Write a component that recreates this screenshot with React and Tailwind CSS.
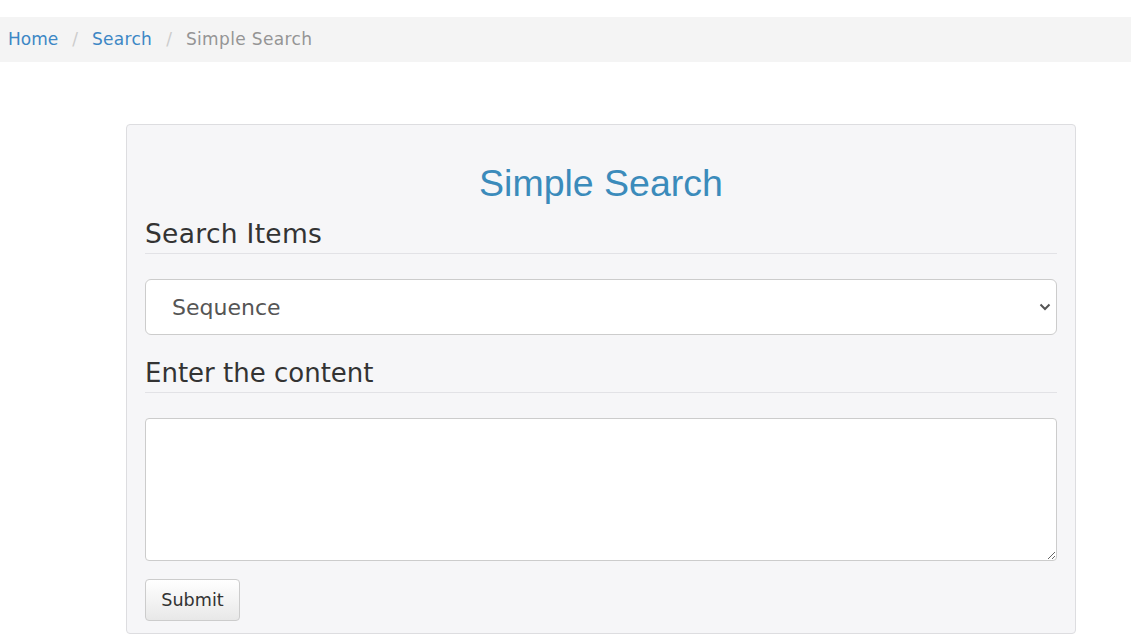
export default function App() {
  const dv = { fontFamily: '"DejaVu Sans", Verdana, sans-serif' };
  return (
    <div className="min-h-[643px] bg-white" style={dv}>
      <div className="h-[17px]" />
      <nav className="flex h-[45px] items-center bg-[#f4f4f4] pl-[8px] text-[17px] leading-[45px]">
        <a className="text-[#3c87c5]" href="#">Home</a>
        <span className="mx-[14px] text-[#cccccc]">/</span>
        <a className="text-[#3c87c5] tracking-[0.3px]" href="#">Search</a>
        <span className="mx-[14px] text-[#cccccc]">/</span>
        <span className="text-[#959595] tracking-[0.35px]">Simple Search</span>
      </nav>
      <div className="ml-[126px] mt-[62px] w-[950px] rounded-[4px] border border-[#dddde0] bg-[#f6f6f8] px-[18px] pb-[12px] pt-[38px]">
        <h2
          className="h-[40px] text-center text-[37.5px] leading-[40px] text-[#3b8bbb]"
          style={{ fontFamily: '"Liberation Sans", Arial, sans-serif' }}
        >
          Simple Search
        </h2>
        <h3 className="mt-[15px] border-b border-[#e2e2e6] pb-[3px] text-[26.5px] leading-[32px] tracking-[0.3px] text-[#333333]">
          Search Items
        </h3>
        <div className="relative mt-[25px]">
          <select
            className="h-[56px] w-full appearance-none rounded-[6px] border border-[#cccccc] bg-white pl-[26px] text-[22px] text-[#555555] outline-none"
            style={dv}
            defaultValue="Sequence"
          >
            <option>Sequence</option>
          </select>
          <svg
            className="pointer-events-none absolute right-[6px] top-[23px]"
            width="12"
            height="10"
            viewBox="0 0 12 10"
          >
            <path d="M1.5 2.5 L6 7 L10.5 2.5" fill="none" stroke="#555555" strokeWidth="2" />
          </svg>
        </div>
        <h3 className="mt-[22px] border-b border-[#e2e2e6] pb-[3px] text-[26px] leading-[32px] text-[#333333]">
          Enter the content
        </h3>
        <textarea
          className="mt-[25px] block h-[143px] w-full rounded-[4px] border border-[#cccccc] bg-white outline-none"
        />
        <button
          className="mt-[18px] h-[42px] w-[95px] rounded-[4px] border border-[#cccccc] bg-gradient-to-b from-white to-[#e8e8e8] text-[17.6px] text-[#333333]"
          style={dv}
        >
          Submit
        </button>
      </div>
    </div>
  );
}
